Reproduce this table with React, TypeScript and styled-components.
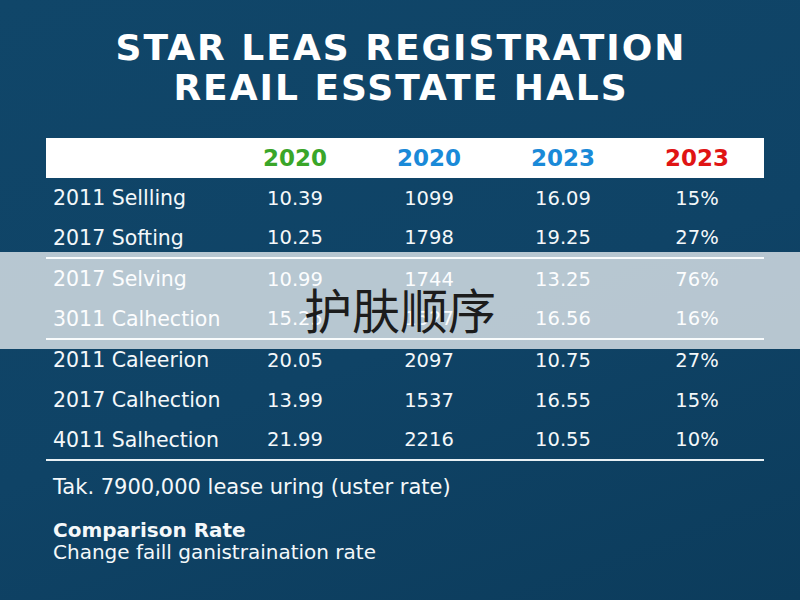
import React from "react";
import styled, { createGlobalStyle } from "styled-components";

const Global = createGlobalStyle`
  html, body { margin: 0; padding: 0; }
  body { width: 800px; height: 600px; overflow: hidden; }
`;

const Page = styled.div`
  position: relative;
  width: 800px;
  height: 600px;
  background: linear-gradient(160deg, #104669 0%, #0f4366 55%, #0c3c5c 100%);
  font-family: "DejaVu Sans", "Noto Sans", sans-serif;
  color: #f4f8fa;
  box-sizing: border-box;
  padding-top: 28px;
`;

const Title = styled.h1`
  margin: 0;
  padding-left: 2px;
  text-align: center;
  font-size: 36px;
  line-height: 40px;
  font-weight: 700;
  letter-spacing: 2px;
  color: #ffffff;
`;

const Table = styled.div`
  margin: 30px 38px 0 46px;
  display: grid;
  grid-template-columns: 182px repeat(4, 134px);
`;

const HeadCell = styled.div<{ $color: string }>`
  height: 40px;
  background: #ffffff;
  display: flex;
  align-items: center;
  justify-content: center;
  font-size: 23px;
  font-weight: 700;
  color: ${(p) => p.$color};
`;

const Cell = styled.div<{ $label?: boolean; $rule?: boolean }>`
  display: flex;
  align-items: center;
  justify-content: ${(p) => (p.$label ? "flex-start" : "center")};
  padding-left: ${(p) => (p.$label ? "7px" : "0")};
  font-size: ${(p) => (p.$label ? "20.5px" : "19.5px")};
  white-space: nowrap;
  color: #f4f8fa;
  border-bottom: ${(p) => (p.$rule ? "2px solid #e8f0f4" : "none")};
  box-sizing: border-box;
  height: ${(p) => (p.$rule ? "41px" : "40px")};
`;

const Footer = styled.div`
  padding: 14px 0 0 53px;
`;

const Note = styled.p`
  margin: 0;
  font-size: 21px;
  line-height: 24px;
`;

const RateTitle = styled.p`
  margin: 20px 0 0;
  font-size: 20px;
  font-weight: 700;
  line-height: 22px;
`;

const RateText = styled.p`
  margin: 0;
  font-size: 20px;
  line-height: 22px;
`;

const Band = styled.div`
  position: absolute;
  left: 0;
  right: 0;
  top: 252px;
  height: 97px;
  background: rgba(255, 255, 255, 0.7);
  display: flex;
  align-items: center;
  justify-content: center;
  padding-top: 14px;
  box-sizing: border-box;
`;

const BandText = styled.span`
  font-family: "Noto Sans CJK SC", "Noto Sans", sans-serif;
  font-size: 48px;
  font-weight: 400;
  color: #1c1c1c;
`;

const heads = [
  { t: "2020", c: "#3aa629" },
  { t: "2020", c: "#1a8ad8" },
  { t: "2023", c: "#1a8ad8" },
  { t: "2023", c: "#e01414" },
];

const rows: { label: string; v: string[]; rule?: boolean }[] = [
  { label: "2011 Sellling", v: ["10.39", "1099", "16.09", "15%"] },
  { label: "2017 Softing", v: ["10.25", "1798", "19.25", "27%"], rule: true },
  { label: "2017 Selving", v: ["10.99", "1744", "13.25", "76%"] },
  { label: "3011 Calhection", v: ["15.25", "1527", "16.56", "16%"], rule: true },
  { label: "2011 Caleerion", v: ["20.05", "2097", "10.75", "27%"] },
  { label: "2017 Calhection", v: ["13.99", "1537", "16.55", "15%"] },
  { label: "4011 Salhection", v: ["21.99", "2216", "10.55", "10%"], rule: true },
];

export default function App() {
  return (
    <Page>
      <Global />
      <Title>
        STAR LEAS REGISTRATION
        <br />
        REAIL ESSTATE HALS
      </Title>
      <Table>
        <HeadCell $color="#000" />
        {heads.map((h, i) => (
          <HeadCell key={i} $color={h.c}>
            {h.t}
          </HeadCell>
        ))}
        {rows.map((r, i) => (
          <React.Fragment key={i}>
            <Cell $label $rule={r.rule}>
              {r.label}
            </Cell>
            {r.v.map((v, j) => (
              <Cell key={j} $rule={r.rule}>
                {v}
              </Cell>
            ))}
          </React.Fragment>
        ))}
      </Table>
      <Footer>
        <Note>Tak. 7900,000 lease uring (uster rate)</Note>
        <RateTitle>Comparison Rate</RateTitle>
        <RateText>Change faill ganistraination rate</RateText>
      </Footer>
      <Band>
        <BandText>护肤顺序</BandText>
      </Band>
    </Page>
  );
}
